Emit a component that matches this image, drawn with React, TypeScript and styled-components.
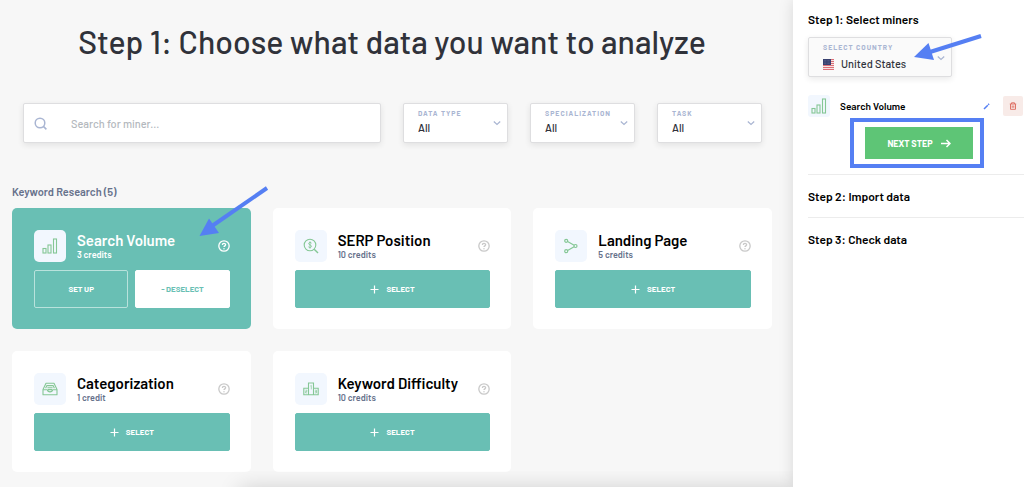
import React, { useId } from "react";
import styled, { createGlobalStyle, css } from "styled-components";

const GlobalStyle = createGlobalStyle`
  * { box-sizing: border-box; }
  html, body { margin: 0; padding: 0; }
  body {
    background: #f7f7f7;
    color: #000;
    font-family: Barlow, Roboto, "Liberation Sans", sans-serif;
    font-size: 11px;
  }
  button, input, select { font-family: inherit; }
`;

const Page = styled.div`
  display: grid;
  grid-template-columns: minmax(0, 1fr) 231px;
  min-height: 100vh;
`;

const Main = styled.main`
  padding: 21px 21px 14px 12px;
`;

const Title = styled.h1`
  margin: 0 0 42px;
  font-size: 32px;
  line-height: 40px;
  font-weight: 500;
  text-align: center;
  color: #30323a;
`;

const Filters = styled.form`
  display: grid;
  grid-template-columns: minmax(0, 1fr) repeat(3, 105px);
  gap: 22px;
  padding: 0 10px 0 11px;
  margin-bottom: 41px;
`;

const fieldBox = css`
  border: 1px solid #dedee0;
  border-radius: 2px;
  box-shadow: 0 2px 6px rgba(0, 0, 0, 0.09);
`;

const SearchBox = styled.label`
  ${fieldBox}
  display: flex;
  align-items: center;
  gap: 24px;
  height: 40px;
  padding: 0 10px;
  background: #fff;
`;

const SearchInput = styled.input`
  flex: 1;
  min-width: 0;
  padding: 0;
  border: 0;
  outline: 0;
  background: transparent;
  font-size: 11px;
  font-weight: 500;
  color: #30323a;
  &::placeholder { color: #b3b8bd; opacity: 1; }
`;

const SelectBox = styled.div<{ $tinted?: boolean }>`
  ${fieldBox}
  position: relative;
  display: grid;
  grid-template-columns: minmax(0, 1fr) 10px;
  grid-template-rows: 8px 16px;
  align-items: center;
  row-gap: ${(p) => (p.$tinted ? 5 : 3)}px;
  height: 40px;
  padding: 5px 5px 0 14px;
  background: ${(p) => (p.$tinted ? "#fafafa" : "#fff")};
`;

const SelectLabel = styled.label`
  font-size: 7px;
  line-height: 8px;
  font-weight: 700;
  letter-spacing: 1px;
  text-transform: uppercase;
  white-space: nowrap;
  color: #a9b5d2;
`;

const SelectValue = styled.span`
  display: flex;
  align-items: center;
  gap: 7px;
  grid-column: 1;
`;

const Select = styled.select`
  flex: 1;
  min-width: 0;
  appearance: none;
  padding: 0;
  border: 0;
  outline: 0;
  background: transparent;
  font-size: 11px;
  line-height: 16px;
  font-weight: 500;
  color: #30323a;
`;

const Chevron = styled.svg`
  grid-column: 2;
  grid-row: 1 / span 2;
  pointer-events: none;
`;

const GroupTitle = styled.h2`
  margin: 0 0 8px;
  font-size: 11px;
  line-height: 16px;
  font-weight: 600;
  color: #66718b;
`;

const CardGrid = styled.div`
  display: grid;
  grid-template-columns: repeat(3, minmax(0, 1fr));
  gap: 22px;
`;

const Card = styled.article<{ $active?: boolean }>`
  position: relative;
  padding: 22px 21px 21px 22px;
  border-radius: 5px;
  background: ${(p) => (p.$active ? "#69bfb4" : "#fff")};
  color: ${(p) => (p.$active ? "#fff" : "#000")};
`;

const CardHead = styled.div`
  display: flex;
  align-items: center;
  gap: 11px;
  margin-bottom: 8px;
`;

const IconTile = styled.span<{ $small?: boolean }>`
  display: flex;
  flex: none;
  align-items: center;
  justify-content: center;
  width: ${(p) => (p.$small ? 22 : 32)}px;
  height: ${(p) => (p.$small ? 22 : 32)}px;
  border-radius: ${(p) => (p.$small ? 3 : 5)}px;
  background: #f2f7fe;
`;

const CardText = styled.div`
  flex: 1;
  min-width: 0;
`;

const CardTitle = styled.h3`
  margin: 0;
  font-size: 15px;
  line-height: 18px;
  font-weight: 600;
  white-space: nowrap;
`;

const Credits = styled.p<{ $active?: boolean }>`
  margin: 0;
  font-size: 9px;
  line-height: 12px;
  font-weight: 600;
  color: ${(p) => (p.$active ? "#fff" : "#66718b")};
`;

const HelpButton = styled.button<{ $active?: boolean }>`
  display: flex;
  padding: 0;
  border: 0;
  background: none;
  color: ${(p) => (p.$active ? "#fff" : "#c9c9c9")};
`;

const Actions = styled.div`
  display: flex;
  gap: 7px;
`;

const ActionButton = styled.button<{ $kind: "fill" | "outline" | "light" }>`
  display: flex;
  flex: 1;
  align-items: center;
  justify-content: center;
  gap: 7px;
  height: 38px;
  padding: 0;
  border: 1px solid
    ${(p) => ({ fill: "#69bfb4", outline: "#b9e2dc", light: "#fff" })[p.$kind]};
  border-radius: 2px;
  background: ${(p) => (p.$kind === "light" ? "#fff" : "#69bfb4")};
  color: ${(p) => (p.$kind === "light" ? "#69bfb4" : "#fff")};
  font-size: 8px;
  line-height: 10px;
  font-weight: 700;
`;

const Sidebar = styled.aside`
  position: relative;
  padding-left: 15px;
  background: #fff;
  box-shadow: 0 0 14px rgba(0, 0, 0, 0.13);
`;

const Step = styled.section`
  padding: 13px 0 12px;
  &:first-child { padding-top: 11px; }
  & + & { border-top: 1px solid #ececec; }
`;

const StepTitle = styled.h2`
  margin: 0;
  font-size: 12px;
  line-height: 17px;
  font-weight: 600;
`;

const StepBody = styled.div`
  display: flex;
  flex-direction: column;
  margin-top: 9px;
`;

const CountryField = styled.div`
  width: 144px;
  margin-bottom: 18px;
`;

const MinerRow = styled.div`
  display: flex;
  align-items: center;
  gap: 10px;
  padding-right: 1px;
  font-size: 10px;
  line-height: 22px;
  font-weight: 600;
`;

const MinerName = styled.span`
  flex: 1;
`;

const RowButton = styled.button<{ $danger?: boolean }>`
  display: flex;
  align-items: center;
  justify-content: center;
  width: ${(p) => (p.$danger ? 20 : 14)}px;
  height: 20px;
  padding: 0;
  border: 0;
  border-radius: 2px;
  background: ${(p) => (p.$danger ? "#f8ebe8" : "none")};
`;

const Highlight = styled.div`
  align-self: flex-start;
  margin: 1px 0 -6px 42px;
  padding: 5px 7px 5px 11px;
  border: 4px solid #557ff3;
`;

const NextButton = styled.button`
  display: flex;
  align-items: center;
  justify-content: center;
  gap: 8px;
  width: 108px;
  height: 32px;
  padding: 0;
  border: 0;
  background: #5ec576;
  color: #fff;
  font-size: 9px;
  font-weight: 700;
`;

const Pointer = styled.svg`
  position: absolute;
  pointer-events: none;
`;

const CardPointer = styled(Pointer)`
  left: 186px;
  top: -22px;
`;

const CountryPointer = styled(Pointer)`
  left: 105px;
  top: -4px;
`;

const BottomShade = styled.div`
  position: fixed;
  left: 0;
  right: 231px;
  bottom: 0;
  height: 16px;
  overflow: hidden;
  pointer-events: none;
  &::after {
    content: "";
    position: absolute;
    left: 240px;
    right: -10px;
    top: 17px;
    height: 40px;
    box-shadow: 0 0 22px rgba(0, 0, 0, 0.17);
  }
`;

const green = "#85c795";

const BarsIcon = () => (
  <svg width="16" height="16" viewBox="0 0 16 16" fill="none" stroke={green} strokeWidth="1.1">
    <rect x="1" y="10.5" width="3" height="4.5" />
    <rect x="6" y="7" width="3" height="8" />
    <rect x="11.5" y="1" width="3" height="14" />
  </svg>
);

const SerpIcon = () => (
  <svg width="16" height="16" viewBox="0 0 16 16" fill="none" stroke={green} strokeWidth="1.1">
    <circle cx="7" cy="7" r="5.8" />
    <path d="M11.2 11.2 15 15" strokeWidth="1.4" />
    <path d="M8.6 5.2C8.3 4.2 5.6 4.2 5.6 5.6c0 1.5 2.9 1.1 2.9 2.7 0 1.5-2.7 1.4-3.1.5M7 3.4v7.2" strokeWidth=".9" />
  </svg>
);

const BranchIcon = () => (
  <svg width="16" height="16" viewBox="0 0 16 16" fill="none" stroke={green} strokeWidth="1.2">
    <circle cx="3.2" cy="2.8" r="1.5" />
    <circle cx="12.5" cy="8" r="1.5" />
    <circle cx="3.2" cy="13.2" r="1.5" />
    <path d="m4.6 3.5 6.5 3.7M4.6 12.5l6.5-3.7" />
  </svg>
);

const TrayIcon = () => (
  <svg width="16" height="16" viewBox="0 0 16 16" fill="none" stroke={green} strokeWidth="1.1" strokeLinejoin="round">
    <path d="M1 8.5 4 2.3h8l3 6.2v5.2H1z" />
    <path d="M1 8.7h4.3c.3 1.6 1.3 2.2 2.7 2.2s2.4-.6 2.7-2.2H15M3.6 7.2l1.3-2.6h6.2l1.3 2.6M5.4 6.7h5.2M6 8.6h4" />
  </svg>
);

const PodiumIcon = () => (
  <svg width="16" height="16" viewBox="0 0 16 16" fill="none" stroke={green} strokeWidth="1.1">
    <path d="M.8 7.2h4.7V2h5v5.2h4.7v6.6H.8zM5.5 7.2v6.6M10.5 7.2v6.6" />
    <path d="m7.4 5 .9-.6v4M2.4 9.2h1.5v1.3H2.5v1.4h1.6M11.9 9.2h1.6v2.7h-1.6m0-1.3h1.6" strokeWidth=".7" />
  </svg>
);

const HelpIcon = () => (
  <svg width="12" height="12" viewBox="0 0 22 22" fill="none" stroke="currentColor" strokeWidth="2.4">
    <circle cx="11" cy="11" r="9.5" />
    <path d="M8 9c0-4 6-3.8 6-.3 0 2-3 2.1-3 4.3" />
    <circle cx="11" cy="16" r="1.3" fill="currentColor" stroke="none" />
  </svg>
);

const PlusIcon = () => (
  <svg width="9" height="9" viewBox="0 0 9 9" stroke="currentColor" strokeWidth="1.2">
    <path d="M4.5.5v8M.5 4.5h8" />
  </svg>
);

const FlagIcon = () => (
  <svg width="11" height="11" viewBox="0 0 11 11">
    <rect width="11" height="11" fill="#f6e4e4" />
    <path d="M0 6.5h11M0 8.5h11M0 10.5h11M5 .5h6M5 2.5h6M5 4.5h6" stroke="#dc7078" strokeWidth="1" />
    <rect width="8" height="6" fill="#384170" />
    <path d="M1 1.5h6M1 3h6M1 4.5h6" stroke="#7d84a6" strokeWidth=".5" strokeDasharray=".6 .8" />
  </svg>
);

type SelectFieldProps = { label: string; value: string; tinted?: boolean; icon?: React.ReactNode; children?: React.ReactNode };

const SelectField = ({ label, value, tinted, icon, children }: SelectFieldProps) => {
  const id = useId();
  return (
    <SelectBox $tinted={tinted}>
      <SelectLabel htmlFor={id}>{label}</SelectLabel>
      <SelectValue>
        {icon}
        <Select id={id} defaultValue={value}>
          <option>{value}</option>
        </Select>
      </SelectValue>
      <Chevron width="10" height="10" viewBox="0 0 10 10" fill="none" stroke="#a9b5d2" strokeWidth="1.2">
        <path d="m1.8 3.5 3.2 3 3.2-3" />
      </Chevron>
      {children}
    </SelectBox>
  );
};

const miners = [
  { name: "Search Volume", credits: "3 credits", icon: <BarsIcon />, active: true },
  { name: "SERP Position", credits: "10 credits", icon: <SerpIcon /> },
  { name: "Landing Page", credits: "5 credits", icon: <BranchIcon /> },
  { name: "Categorization", credits: "1 credit", icon: <TrayIcon /> },
  { name: "Keyword Difficulty", credits: "10 credits", icon: <PodiumIcon /> },
];

export default function App() {
  return (
    <>
      <GlobalStyle />
      <Page>
        <Main>
          <Title>Step 1: Choose what data you want to analyze</Title>
          <Filters>
            <SearchBox>
              <svg width="13" height="13" viewBox="0 0 13 13" fill="none" stroke="#a9b5d2" strokeWidth="1.5">
                <circle cx="6" cy="6" r="4.8" />
                <path d="m9.4 9.4 3 3" />
              </svg>
              <SearchInput type="search" aria-label="Search for miner" placeholder="Search for miner..." />
            </SearchBox>
            <SelectField label="Data type" value="All" />
            <SelectField label="Specialization" value="All" />
            <SelectField label="Task" value="All" />
          </Filters>
          <GroupTitle>Keyword Research (5)</GroupTitle>
          <CardGrid>
            {miners.map((m) => (
              <Card key={m.name} $active={m.active}>
                <CardHead>
                  <IconTile>{m.icon}</IconTile>
                  <CardText>
                    <CardTitle>{m.name}</CardTitle>
                    <Credits $active={m.active}>{m.credits}</Credits>
                  </CardText>
                  <HelpButton type="button" $active={m.active} aria-label={`About ${m.name}`}>
                    <HelpIcon />
                  </HelpButton>
                </CardHead>
                <Actions>
                  {m.active ? (
                    <>
                      <ActionButton type="button" $kind="outline">SET UP</ActionButton>
                      <ActionButton type="button" $kind="light">- DESELECT</ActionButton>
                    </>
                  ) : (
                    <ActionButton type="button" $kind="fill">
                      <PlusIcon />
                      SELECT
                    </ActionButton>
                  )}
                </Actions>
                {m.active && (
                  <CardPointer width="72" height="52" viewBox="0 0 72 52">
                    <path d="M69 2 14 40" stroke="#557ff3" strokeWidth="4" />
                    <path d="M1.5 50 11 32.5 21 47z" fill="#557ff3" />
                  </CardPointer>
                )}
              </Card>
            ))}
          </CardGrid>
        </Main>
        <Sidebar>
          <Step>
            <StepTitle>Step 1: Select miners</StepTitle>
            <StepBody>
              <CountryField>
                <SelectField label="Select country" value="United States" tinted icon={<FlagIcon />}>
                  <CountryPointer width="70" height="30" viewBox="0 0 70 30">
                    <path d="M67 2 16 18" stroke="#557ff3" strokeWidth="4" />
                    <path d="M0 23 14.5 9 20 26z" fill="#557ff3" />
                  </CountryPointer>
                </SelectField>
              </CountryField>
              <MinerRow>
                <IconTile $small><BarsIcon /></IconTile>
                <MinerName>Search Volume</MinerName>
                <RowButton type="button" aria-label="Edit Search Volume">
                  <svg width="7" height="7" viewBox="0 0 7 7" stroke="#557ff3" strokeWidth="1.5">
                    <path d="M1 6 4.8 2.2M5.2 1.8l.9-.9" />
                  </svg>
                </RowButton>
                <RowButton type="button" $danger aria-label="Remove Search Volume">
                  <svg width="8" height="8" viewBox="0 0 8 8" fill="none" stroke="#df7468" strokeWidth="1">
                    <path d="M.8 2h6.4M2.5 2V.8h3V2M1.5 2v5.3h5V2M3.2 3.5v2.3M4.8 3.5v2.3" />
                  </svg>
                </RowButton>
              </MinerRow>
              <Highlight>
                <NextButton type="button">
                  NEXT STEP
                  <svg width="10" height="9" viewBox="0 0 10 9" fill="none" stroke="currentColor" strokeWidth="1.5">
                    <path d="M0 4.5h9M5.5 1 9 4.5 5.5 8" />
                  </svg>
                </NextButton>
              </Highlight>
            </StepBody>
          </Step>
          <Step><StepTitle>Step 2: Import data</StepTitle></Step>
          <Step><StepTitle>Step 3: Check data</StepTitle></Step>
        </Sidebar>
      </Page>
      <BottomShade />
    </>
  );
}
